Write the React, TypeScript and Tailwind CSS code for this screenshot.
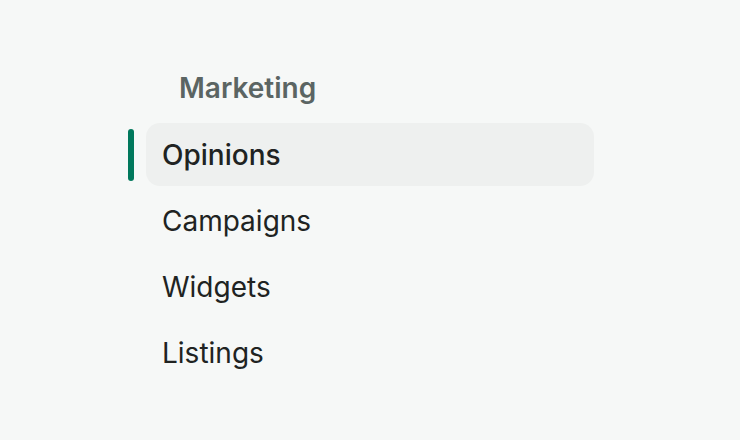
const items = ["Opinions", "Campaigns", "Widgets", "Listings"];

function NavItem({ label, active }: { label: string; active?: boolean }) {
  return (
    <div className="flex items-center gap-3">
      <div
        className={`w-[6px] h-[52px] rounded-full ${active ? "bg-[#00785c]" : "bg-transparent"}`}
      />
      <div
        className={`flex items-center w-[448px] h-[63px] rounded-[14px] pl-4 text-[28px] text-[#202322] ${
          active ? "bg-[#eef0ef] font-medium" : "font-normal"
        }`}
      >
        {label}
      </div>
    </div>
  );
}

export default function App() {
  return (
    <div
      className="w-[740px] h-[440px] bg-[#f6f8f7] pl-[128px] pt-[68px]"
      style={{ fontFamily: "Inter, 'Noto Sans', sans-serif" }}
    >
      <div className="pl-[51px] h-[40px] flex items-center text-[28px] font-semibold text-[#5b6563]">
        Marketing
      </div>
      <div className="mt-[15px] flex flex-col gap-[3px]">
        {items.map((it, i) => (
          <NavItem key={it} label={it} active={i === 0} />
        ))}
      </div>
    </div>
  );
}
